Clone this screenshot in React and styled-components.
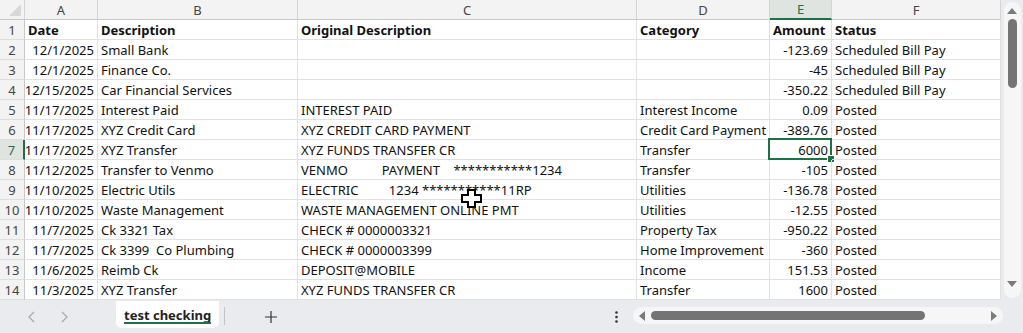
import React from "react";
import styled, { createGlobalStyle } from "styled-components";

const GlobalStyle = createGlobalStyle`
  html, body {
    margin: 0;
    padding: 0;
    background: #ffffff;
  }
  body {
    font-family: "Noto Sans", "Liberation Sans", sans-serif;
  }
`;

const COLS = [
  { key: "A", width: 73 },
  { key: "B", width: 200 },
  { key: "C", width: 339 },
  { key: "D", width: 133 },
  { key: "E", width: 62 },
  { key: "F", width: 169 },
];

const headers = ["Date", "Description", "Original Description", "Category", "Amount", "Status"];

const rows = [
  ["12/1/2025", "Small Bank", "", "", "-123.69", "Scheduled Bill Pay"],
  ["12/1/2025", "Finance Co.", "", "", "-45", "Scheduled Bill Pay"],
  ["12/15/2025", "Car Financial Services", "", "", "-350.22", "Scheduled Bill Pay"],
  ["11/17/2025", "Interest Paid", "INTEREST PAID", "Interest Income", "0.09", "Posted"],
  ["11/17/2025", "XYZ Credit Card", "XYZ CREDIT CARD PAYMENT", "Credit Card Payment", "-389.76", "Posted"],
  ["11/17/2025", "XYZ Transfer", "XYZ FUNDS TRANSFER CR", "Transfer", "6000", "Posted"],
  ["11/12/2025", "Transfer to Venmo", "VENMO          PAYMENT    ***********1234", "Transfer", "-105", "Posted"],
  ["11/10/2025", "Electric Utils", "ELECTRIC         1234 ***********11RP", "Utilities", "-136.78", "Posted"],
  ["11/10/2025", "Waste Management", "WASTE MANAGEMENT ONLINE PMT", "Utilities", "-12.55", "Posted"],
  ["11/7/2025", "Ck 3321 Tax", "CHECK # 0000003321", "Property Tax", "-950.22", "Posted"],
  ["11/7/2025", "Ck 3399  Co Plumbing", "CHECK # 0000003399", "Home Improvement", "-360", "Posted"],
  ["11/6/2025", "Reimb Ck", "DEPOSIT@MOBILE", "Income", "151.53", "Posted"],
  ["11/3/2025", "XYZ Transfer", "XYZ FUNDS TRANSFER CR", "Transfer", "1600", "Posted"],
];

const SEL_ROW = 7;
const SEL_COL = "E";
const GREEN = "#1e7145";

const Page = styled.div`
  width: 1023px;
  height: 333px;
  display: flex;
  flex-direction: column;
  background: #e9ebee;
  overflow: hidden;
  position: relative;
`;

const Main = styled.div`
  display: flex;
  height: 300px;
  background: #ffffff;
`;

const Grid = styled.div`
  display: grid;
  grid-template-columns: 25px ${COLS.map((c) => `${c.width}px`).join(" ")};
  grid-auto-rows: 20px;
  width: 1001px;
  overflow: hidden;
  font-size: 13px;
  color: #111;
`;

const Corner = styled.div`
  background: #f3f3f3;
  border-right: 1px solid #d4d4d4;
  border-bottom: 1px solid #c8c8c8;
  position: relative;
  &::after {
    content: "";
    position: absolute;
    right: 3px;
    bottom: 3px;
    border-left: 12px solid transparent;
    border-bottom: 12px solid #d8d8d8;
  }
`;

const ColHead = styled.div`
  background: ${(p) => (p.$sel ? "#dfe4e0" : "#f3f3f3")};
  border-right: 1px solid #d4d4d4;
  border-bottom: ${(p) => (p.$sel ? `2px solid ${GREEN}` : "1px solid #c8c8c8")};
  color: ${(p) => (p.$sel ? GREEN : "#444")};
  display: flex;
  align-items: center;
  justify-content: center;
  font-size: 13px;
`;

const RowHead = styled.div`
  background: ${(p) => (p.$sel ? "#dfe4e0" : "#f3f3f3")};
  border-right: ${(p) => (p.$sel ? `2px solid ${GREEN}` : "1px solid #c8c8c8")};
  border-bottom: 1px solid #dedede;
  color: ${(p) => (p.$sel ? GREEN : "#444")};
  display: flex;
  align-items: center;
  justify-content: center;
  font-size: 13px;
`;

const Cell = styled.div`
  border-right: 1px solid #e1e1e1;
  border-bottom: 1px solid #e1e1e1;
  padding: 0 ${(p) => (p.$right ? "3px" : "2px")} 0 3px;
  display: flex;
  align-items: center;
  justify-content: ${(p) => (p.$right ? "flex-end" : "flex-start")};
  white-space: pre;
  overflow: visible;
  font-weight: ${(p) => (p.$bold ? 700 : 400)};
  position: relative;
`;

const Selection = styled.div`
  position: absolute;
  left: -2px;
  top: -2px;
  right: -1px;
  bottom: -1px;
  border: 2px solid ${GREEN};
  pointer-events: none;
  &::after {
    content: "";
    position: absolute;
    right: -5px;
    bottom: -5px;
    width: 6px;
    height: 6px;
    background: ${GREEN};
    border: 1px solid #fff;
  }
`;

const VScroll = styled.div`
  width: 22px;
  background: #e9ebee;
  display: flex;
  justify-content: center;
  padding-top: 2px;
`;

const VTrack = styled.div`
  width: 17px;
  height: 296px;
  background: #f6f6f6;
  border-radius: 9px;
  display: flex;
  flex-direction: column;
  align-items: center;
  padding-top: 5px;
  box-sizing: border-box;
`;

const VThumb = styled.div`
  width: 9px;
  height: 69px;
  margin-top: 4px;
  border-radius: 5px;
  background: #747474;
`;

const Spring = styled.div`
  flex: 1;
`;

const Bottom = styled.div`
  height: 33px;
  display: flex;
  align-items: flex-start;
`;

const NavBtn = styled.div`
  width: 32px;
  height: 33px;
  display: flex;
  align-items: center;
  justify-content: center;
  color: #a8a8a8;
`;

const Tab = styled.div`
  margin-top: 1px;
  height: 27px;
  padding: 0 8px;
  background: #ffffff;
  border-radius: 0 0 6px 6px;
  display: flex;
  align-items: center;
  font-size: 13px;
  font-weight: 700;
  color: #222;
  position: relative;
  &::after {
    content: "";
    position: absolute;
    left: 8px;
    right: 8px;
    bottom: 4px;
    height: 2px;
    background: ${GREEN};
  }
`;

const TabSep = styled.div`
  width: 1px;
  height: 18px;
  background: #c4c4c4;
  margin: 7px 0 0 5px;
`;

const AddBtn = styled.div`
  width: 92px;
  height: 33px;
  display: flex;
  align-items: center;
  justify-content: center;
  color: #333;
`;

const Dots = styled.div`
  width: 34px;
  height: 33px;
  display: flex;
  align-items: center;
  justify-content: center;
`;

const HScroll = styled.div`
  margin-top: 7px;
  width: 370px;
  height: 17px;
  background: #f6f6f6;
  border-radius: 9px;
  display: flex;
  align-items: center;
  padding: 0 5px;
  box-sizing: border-box;
`;

const HThumb = styled.div`
  width: 274px;
  height: 9px;
  margin-left: 5px;
  border-radius: 5px;
  background: #747474;
`;

const Cursor = styled.svg`
  position: absolute;
  left: 461px;
  top: 189px;
  pointer-events: none;
`;

const Chevron = ({ dir }) => (
  <svg width="10" height="12" viewBox="0 0 10 12">
    <path
      d={dir === "left" ? "M7 1 L2 6 L7 11" : "M3 1 L8 6 L3 11"}
      fill="none"
      stroke="currentColor"
      strokeWidth="1.2"
    />
  </svg>
);

const Tri = ({ dir }) => {
  const d = {
    up: "M0 7 L5 1 L10 7 Z",
    down: "M0 1 L5 7 L10 1 Z",
    left: "M7 0 L1 5 L7 10 Z",
    right: "M1 0 L7 5 L1 10 Z",
  }[dir];
  const vertical = dir === "up" || dir === "down";
  return (
    <svg width={vertical ? 10 : 8} height={vertical ? 8 : 10} viewBox={vertical ? "0 0 10 8" : "0 0 8 10"}>
      <path d={d} fill="#7a7a7a" />
    </svg>
  );
};

const App = () => {
  return (
    <Page>
      <GlobalStyle />
      <Main>
        <Grid>
          <Corner />
          {COLS.map((c) => (
            <ColHead key={c.key} $sel={c.key === SEL_COL}>
              {c.key}
            </ColHead>
          ))}

          <RowHead>1</RowHead>
          {headers.map((h) => (
            <Cell key={h} $bold>
              {h}
            </Cell>
          ))}

          {rows.map((r, i) => {
            const rowNum = i + 2;
            return (
              <React.Fragment key={rowNum}>
                <RowHead $sel={rowNum === SEL_ROW}>{rowNum}</RowHead>
                {r.map((v, j) => (
                  <Cell key={j} $right={j === 0 || j === 4}>
                    {v}
                    {rowNum === SEL_ROW && COLS[j].key === SEL_COL && <Selection />}
                  </Cell>
                ))}
              </React.Fragment>
            );
          })}
        </Grid>
        <VScroll>
          <VTrack>
            <Tri dir="up" />
            <VThumb />
            <Spring />
            <div style={{ marginBottom: 5 }}>
              <Tri dir="down" />
            </div>
          </VTrack>
        </VScroll>
      </Main>

      <Bottom>
        <NavBtn style={{ marginLeft: 16 }}>
          <Chevron dir="left" />
        </NavBtn>
        <NavBtn>
          <Chevron dir="right" />
        </NavBtn>
        <div style={{ width: 36 }} />
        <Tab>test checking</Tab>
        <TabSep />
        <AddBtn>
          <svg width="12" height="12" viewBox="0 0 12 12">
            <path d="M6 0 V12 M0 6 H12" stroke="#333" strokeWidth="1.2" />
          </svg>
        </AddBtn>
        <Spring />
        <Dots>
          <svg width="3" height="12" viewBox="0 0 3 12">
            <circle cx="1.5" cy="1.5" r="1.3" fill="#333" />
            <circle cx="1.5" cy="6" r="1.3" fill="#333" />
            <circle cx="1.5" cy="10.5" r="1.3" fill="#333" />
          </svg>
        </Dots>
        <HScroll>
          <Tri dir="left" />
          <HThumb />
          <Spring />
          <Tri dir="right" />
        </HScroll>
        <div style={{ width: 20 }} />
      </Bottom>

      <Cursor width="22" height="20" viewBox="0 0 22 20">
        <path
          d="M7 1 H14 V6 H20 V13 H14 V18 H7 V13 H1 V6 H7 Z"
          fill="#fff"
          stroke="#000"
          strokeWidth="2"
        />
      </Cursor>
    </Page>
  );
};

export default App;
